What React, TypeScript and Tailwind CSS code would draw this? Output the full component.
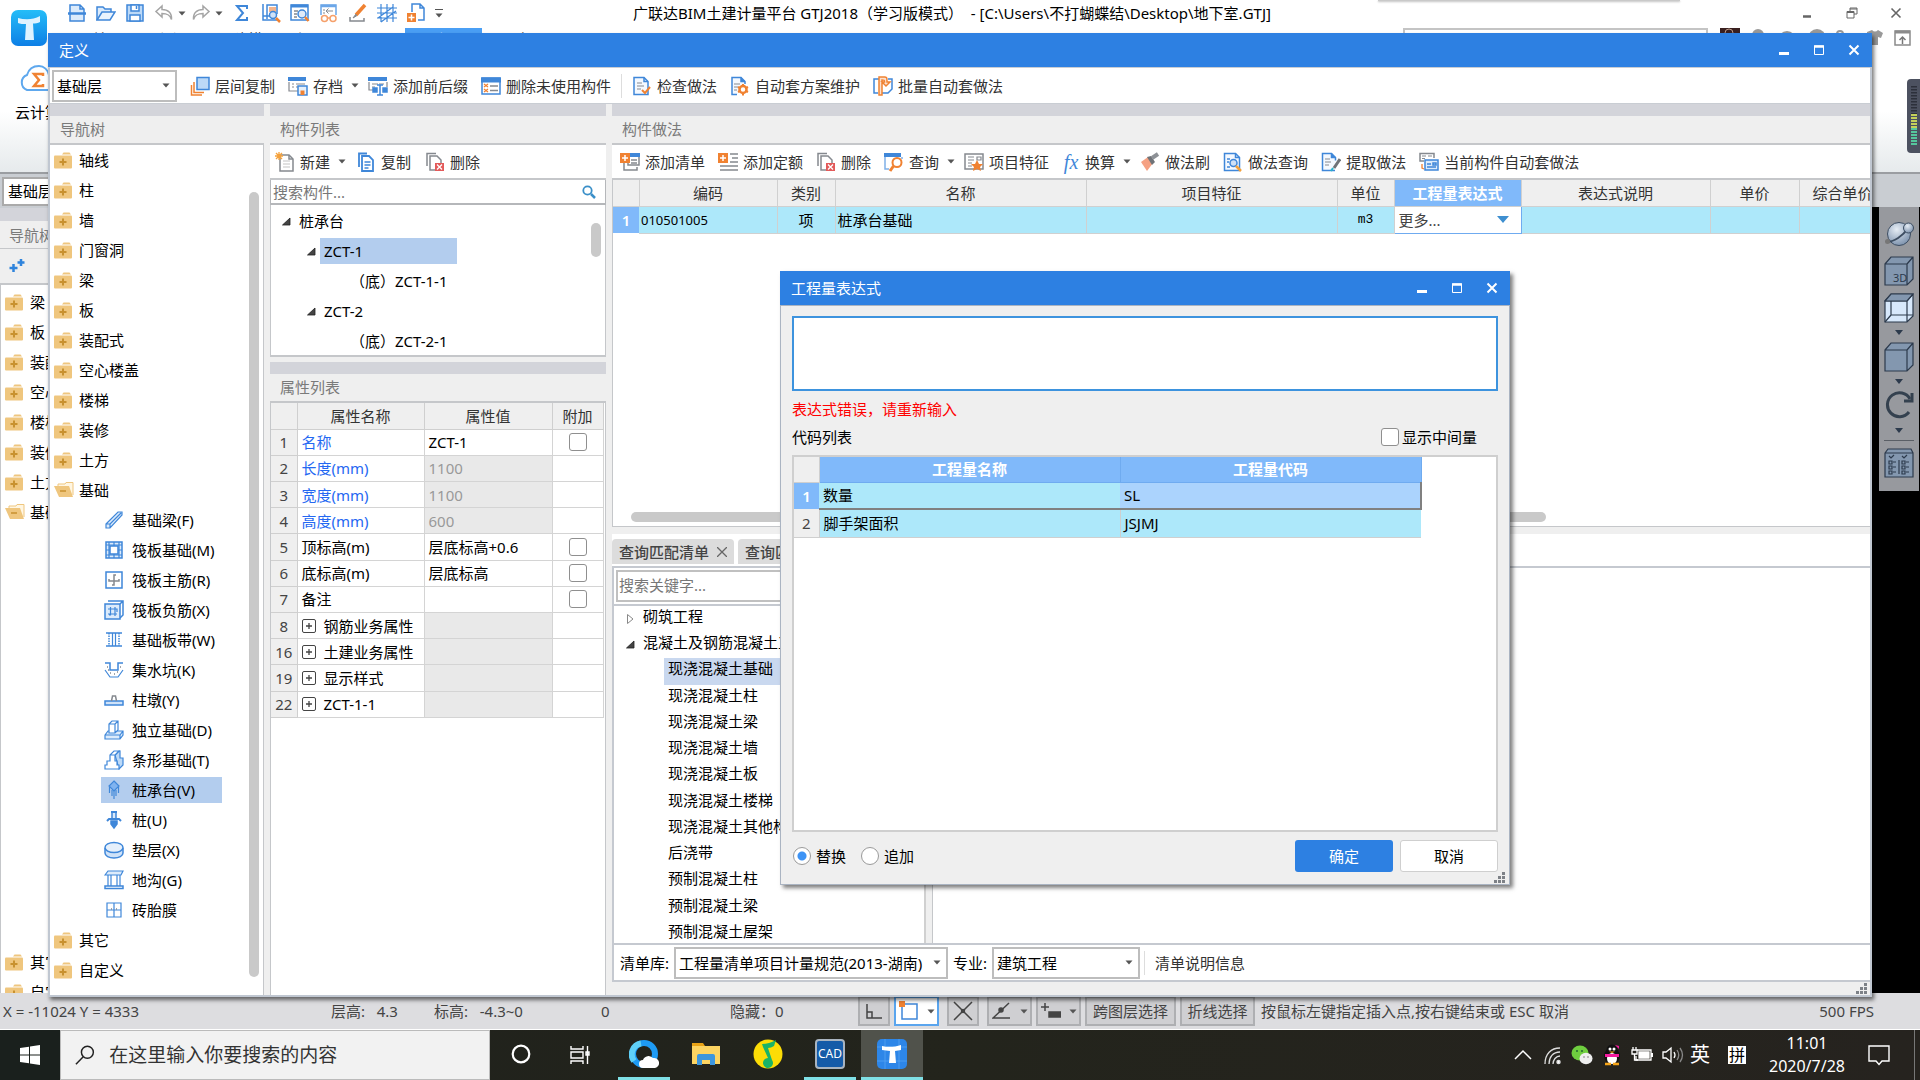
import React from "react";

const B = "#3f87d9";
const O = "#f08232";
const G = "#85898f";

type Kids = { children?: React.ReactNode };

function I({ children }: Kids) {
  return (
    <svg viewBox="0 0 20 20" className="h-5 w-5 shrink-0" fill="none" stroke={B} strokeWidth="1.5" aria-hidden="true">
      {children}
    </svg>
  );
}

function Caret() {
  return (
    <svg viewBox="0 0 8 5" className="h-[5px] w-2 shrink-0" aria-hidden="true">
      <path d="M0.5 0.5h7L4 4.5z" fill="#555" />
    </svg>
  );
}

/* ---------- quick access icons ---------- */
const quick = {
  newDoc: <I><path d="M3 2h10l4 4v12H3zM13 2v4h4" fill="#dcebfb" /><path d="M1 10.500h18" strokeWidth="2.500" /></I>,
  open: <I><path d="M1 17V4h6l2 2h6v3" fill="#dcebfb" /><path d="M1 17l5-8h13l-5 8z" fill="#eaf3fd" /></I>,
  save: <I><path d="M2 2h16v16H2z" fill="#bcd9f7" /><path d="M6 2h8v6H6zM5 12h10v6H5z" fill="#fff" /><path d="M11.500 3v3" /></I>,
  undo: <I><path d="M8 3L2 8.500 8 14v-3.500c5 0 8 1 9.500 6C18 10 14 6.500 8 6.500z" stroke="#a5a5a5" /></I>,
  redo: <I><path d="M12 3l6 5.500L12 14v-3.500c-5 0-8 1-9.500 6C2 10 6 6.500 12 6.500z" stroke="#a5a5a5" /></I>,
  sigma: <I><path d="M15 6V3H5l6 7-6 7h10v-3" strokeWidth="2" /></I>,
  calc: <I><path d="M2 1v16h14M6 16V2h10v9" /><path d="M8 4h7v5H8z" fill="#f3b48c" stroke="none" /><path d="M2 13h7" /><circle cx="12" cy="12" r="3.500" fill="#cfe2f8" /><path d="M15 15l4 4" stroke={O} strokeWidth="2.500" /></I>,
  find: <I><path d="M1 2h17v15H1z" fill="#fff" /><path d="M1 3h17" strokeWidth="3" /><path d="M4 8h4M4 11h3M4 14h3" stroke={G} /><circle cx="12" cy="11" r="4" fill="#dfeaf8" /><path d="M15 14l3.500 4" stroke={O} strokeWidth="2.500" /></I>,
  glasses: <I><path d="M2 12V2h15v10" stroke="#6ba6e8" /><path d="M2 3h15" stroke="#6ba6e8" strokeWidth="2.500" /><path d="M14 8H7m2.500-2.500L7 8l2.500 2.500M4 7h2M4 10h2" stroke={G} strokeWidth="1" /><circle cx="5.500" cy="15.500" r="3" stroke="#f5a06b" /><circle cx="14" cy="15.500" r="3" stroke="#f5a06b" /><path d="M8.500 15h2.500" stroke="#f5a06b" /></I>,
  pencil: <I><path d="M17 2L8 12" stroke={O} strokeWidth="3.500" /><path d="M8 11l-3 4 4-2.500" stroke={G} fill={G} strokeWidth="1" /><path d="M2 14v4h14v-3" stroke={G} /></I>,
  grid: <I><path d="M0 5h20M0 10h20M0 15h20M4 1v18M10 1v18M16 1v18M1 15L16 4M4 19L19 8" strokeWidth="1.200" /></I>,
  addDoc: <I><path d="M6 9V1h8l4 4v12h-6M14 1v4h4" /><path d="M1 10h9v9H1z" fill={O} stroke="none" /><path d="M5.500 11.500v6M2.500 14.500h6" stroke="#fff" /></I>,
};

/* ---------- toolbar icons ---------- */
const tb = {
  layers: <I><path d="M7 1.500h12v12H7z" fill="#bcd9f7" /><path d="M4 6v10.500h10" stroke={O} strokeWidth="1.500" /><path d="M1.500 9v10H12" stroke={O} /></I>,
  archive: <I><path d="M1 6v9h9M4 8h2M8 8h9M4 11h2M8 11h2" stroke={G} strokeWidth="1.200" /><path d="M0 3h18" strokeWidth="4" /><path d="M10 10h9v9h-9z" fill="#e6f0fb" /><path d="M12.500 14.500h4V19h-4z" fill={O} stroke="none" /></I>,
  affix: <I><path d="M1 6v8h5M19 6v5M4 8h6M11 8h5M4 11h3" stroke={G} strokeWidth="1.200" /><path d="M0 3h19" strokeWidth="4" /><path d="M5 12h4v4H5zM15 12h4v4h-4z" fill={B} /><path d="M9 9h6M9 19h6M12 9v10" /></I>,
  unused: <I><path d="M1 2h18v16H1z" fill="#fff" /><path d="M0 4h20" strokeWidth="5" /><path d="M3 8l4 3m0-3l-4 3M3 13l4 3m0-3l-4 3" stroke={O} strokeWidth="1.200" /><path d="M9 10h8M9 14.500h8" stroke={G} /></I>,
  check: <I><path d="M2 1.500h10l4 4v13H2z" fill="#f4f9ff" /><path d="M12 1.500v4h4" /><path d="M5 7h5M5 10h7M5 13h4" stroke={G} strokeWidth="1.200" /><path d="M10 14l3 3 5-6" stroke={O} strokeWidth="2" /></I>,
  gearDoc: <I><path d="M7 18.500H2v-17h9l4 4V8" fill="#f4f9ff" /><path d="M11 1.500v4h4" fill={B} /><path d="M4 8h6M4 11h4M4 14h3" stroke={G} strokeWidth="1.200" /><circle cx="13" cy="13.500" r="3.500" stroke={O} strokeWidth="2.500" /><path d="M13 8v2M13 17v2.500M8 11l2 1M16 15l2 1M8 16l2-1M16 12l2-1" stroke={O} strokeWidth="2" /></I>,
  batch: <I><path d="M6 3H1v14h4M15 3h4v10l-4 4H9" /><path d="M6 1h6c2 0 2 1 2 5l3 0-4 4-4-4 2.500 0c0-2-.5-2-2.500-2v15H6z" stroke={O} fill="#fbe0cf" /></I>,
  create: <I><path d="M5 3h9l4 4v12H5z" stroke={G} fill="#fff" /><path d="M14 3v4h4" stroke={G} /><path d="M8 9h7M8 12h7M8 15h7" stroke="#d8d8d8" /><path d="M1 1l6 6M7 1L1 7M4 0v8M0 4h8" stroke="#f5a13a" strokeWidth="1.300" /></I>,
  copy: <I><path d="M3 15V1.500h8" strokeWidth="1.800" /><path d="M6 4h7l4 4v11H6z" fill="#fff" strokeWidth="1.800" /><path d="M8.500 10h6M8.500 13h6M8.500 16h4" /></I>,
  del: <I><path d="M2 14V1.500h9" stroke={G} /><path d="M10 18H5V4h7l4 4v3" stroke={G} /><path d="M10 11h9v8h-9z" fill="#e35a5a" stroke="none" /><path d="M12 12.500l5 5m0-5l-5 5" stroke="#fff" strokeWidth="1.300" /></I>,
  addList: <I><path d="M8 3h11v10H8z" fill="#fff" stroke={G} /><path d="M8 3h12" strokeWidth="4" /><path d="M4 11v7h13v-3M11 8h6M11 11h6" stroke={G} /><path d="M0 1h10v10H0z" fill={O} stroke="none" /><path d="M5 3v6M2 6h6" stroke="#fff" /></I>,
  addQuota: <I><path d="M12 2h8M14 6h6M12 10h8M2 14h18M2 18h18" stroke={G} /><path d="M0 1h10v10H0z" fill={O} stroke="none" /><path d="M5 3v6M2 6h6" stroke="#fff" /></I>,
  query: <I><path d="M1 5v12h4M18 5v2" stroke="#7fb0e8" /><path d="M0 3h17" strokeWidth="4" /><circle cx="13" cy="10.500" r="4.500" stroke={O} strokeWidth="2" fill="#fff" /><path d="M9.500 14L6 19" stroke={O} strokeWidth="3" /></I>,
  feature: <I><path d="M1 2h18v15H1z" stroke={G} fill="#fff" /><path d="M4 5h6M4 8h6M4 11h4M4 14h4M13 5h4v3h-4z" stroke={G} strokeWidth="1.200" /><path d="M13 8l2 4h4l-3 3 1 4-4-2-4 2 1-4-3-3h4z" fill={O} stroke="none" /></I>,
  brush: <I><path d="M1 10l7-5 5 6-6 8z" fill="#f5a183" stroke="none" /><path d="M7 5l4-1 4 6-3 3z" fill="#6f7378" stroke="none" /><path d="M12 6l6-4" stroke="#8d9196" strokeWidth="4" /></I>,
  methodQuery: <I><path d="M1.500 1.500h11l4 4v13h-15z" fill="#f4f9ff" /><path d="M12.500 1.500v4h4M4 7h3M4 10h2M4 15h3" /><circle cx="10.500" cy="11" r="3.500" fill="#cfe0f5" /><path d="M13 14l5 5" stroke="#f5a13a" strokeWidth="2.500" /></I>,
  extract: <I><path d="M14 18.500H1.500v-17h9l4 4v3" fill="#f4f9ff" /><path d="M10.500 1.500v4h4" fill={B} /><path d="M4 7h5M4 10h6M4 13h4" stroke={G} strokeWidth="1.200" /><path d="M19 7l-6 9" stroke="#6f7378" strokeWidth="3" /><path d="M12 16l-2 3" stroke="#27b3c9" strokeWidth="2" /></I>,
  autoSet: <I><path d="M5 9H1V1.500h14V6" stroke={G} fill="#fff" /><path d="M3 4h4M3 6.500h3M9 4h4" stroke={G} strokeWidth="1.200" /><path d="M6 8h13v10H6z" fill="#dcebfb" /><path d="M8 12h4M8 15h9M14 11h3v2h-3z" /><path d="M3 12v4l2 1" stroke={O} strokeWidth="1.300" /></I>,
};

const fx = <span className="w-[18px] shrink-0 text-center font-['Liberation_Serif',serif] text-[20px] leading-5 text-[#3f87d9] italic">fx</span>;

/* ---------- navigation icons ---------- */
function FolderClosed() {
  return (
    <svg viewBox="0 0 18 17" className="h-[17px] w-[18px] shrink-0" aria-hidden="true">
      <path d="M8 2.500L9.500 .5h6l1.500 2z" fill="#efc67e" />
      <rect x="0" y="3.500" width="18" height="13" rx="1" fill="#efc67e" />
      <path d="M9 6.500v7M5.500 10h7" stroke="#c8912f" strokeWidth="2" />
    </svg>
  );
}
function FolderOpen() {
  return (
    <svg viewBox="0 0 20 16" className="-mr-0.5 h-4 w-5 shrink-0" aria-hidden="true">
      <path d="M4 4V2h7l1-1.500h7V13" fill="#fff6e2" stroke="#efc67e" />
      <path d="M0 4h15l4 11H5z" fill="#efc67e" />
      <path d="M6 9h6" stroke="#c8912f" strokeWidth="1.500" />
    </svg>
  );
}

const sub: { label: string; icon: React.ReactNode }[] = [
  { label: "基础梁(F)", icon: <I><path d="M2 14L14 2h4v3L6 18H2zM2 14h4v4M6 14L17 3" fill="#dcebfb" strokeWidth="1.200" /></I> },
  { label: "筏板基础(M)", icon: <I><path d="M2 2h16v16H2z" fill="#dcebfb" /><path d="M6 6h8v8H6z" fill="#fff" /><path d="M2 5h16M2 15h16M5 2v16M15 2v16M10 2v4M10 14v4M2 10h4M14 10h4" strokeWidth="1.200" /></I> },
  { label: "筏板主筋(R)", icon: <I><path d="M2 2h16v16H2z" /><path d="M5 9v2h10V9M12 5h-2v10H8" stroke={G} /></I> },
  { label: "筏板负筋(X)", icon: <I><path d="M4 1h15v14l-3 3M16 4l3-3" /><path d="M1 4h15v15H1z" fill="#dcebfb" /><path d="M4 9h9v3M4 14h9M6.500 7v8H5M11 7v9" strokeWidth="1.200" /></I> },
  { label: "基础板带(W)", icon: <I><path d="M2 3h16M2 16h16" /><path d="M8.500 3v13M11.500 3v13" strokeWidth="1.200" /><path d="M5 3v13M15 3v13" strokeDasharray="1.500 1" /></I> },
  { label: "集水坑(K)", icon: <I><path d="M1 3h5v7h8V3h5" /><path d="M1 10l5 7h8l5-7" strokeWidth="1.200" /><path d="M3 7h1M6 13h1M10 14h1M13 12h1M16 7h1M4 10h1" stroke={G} /></I> },
  { label: "柱墩(Y)", icon: <I><path d="M1 11h18v4H1z" fill="#cfe2f8" /><path d="M7.500 11l1-5h3l1 5" stroke={G} /></I> },
  { label: "独立基础(D)", icon: <I><path d="M1 15l3-4h15v4l-3 4H1zM1 15h15v4M16 15l3-4" fill="#dcebfb" strokeWidth="1.200" /><path d="M5 13V4l3-3h6v9l-3 3zM5 4h6v9M11 4l3-3" fill="#fff" strokeWidth="1.200" /></I> },
  { label: "条形基础(T)", icon: <I><path d="M11 5l4-4 1 0v7h3v7l-4 4z" fill="#bcd9f7" strokeWidth="1.200" /><path d="M1 19v-4h2v-4h3V5l4-4h5l-4 4v6h2v4h2v4zM6 5h5" fill="#fff" strokeWidth="1.200" /></I> },
  { label: "桩承台(V)", icon: <I><path d="M10 1l5 5-5 5-5-5z" fill="#7fb3f0" strokeWidth="1.200" /><path d="M5.500 7v6M10 11v8M14.500 7v6M8 10v6M12 10v6" strokeWidth="1.200" /></I> },
  { label: "桩(U)", icon: <I><path d="M8 2h4v7H8z" fill="#dcebfb" /><path d="M7 2h6" strokeWidth="2" /><path d="M3 11l2-2h10l2 2" strokeWidth="2" /><path d="M7 11h6v3l-3 4-3-4z" fill={B} /></I> },
  { label: "垫层(X)", icon: <I><path d="M1 8v5c0 3 4 5 9 5s9-2 9-5V8" fill="#cfe2f8" /><ellipse cx="10" cy="7.500" rx="9" ry="5" fill="#e6f0fb" /></I> },
  { label: "地沟(G)", icon: <I><path d="M1 5l3-4h15l-2 4zM1 5h16" fill="#dcebfb" strokeWidth="1.200" /><path d="M4 5v11M7 5v11M13 5v11M16 5v11" strokeWidth="1.200" /><path d="M1 16h18v2.500H1z" /></I> },
  { label: "砖胎膜", icon: <I><path d="M3 3h14v14H3zM10 3v14M3 10h14" strokeWidth="1.200" /><path d="M7 9h1M12 9h1" stroke={G} /></I> },
];

const navTop = ["轴线", "柱", "墙", "门窗洞", "梁", "板", "装配式", "空心楼盖", "楼梯", "装修", "土方"];

function NavRow({ label, open = false }: { label: string; open?: boolean }) {
  return (
    <li className="flex h-[30px] shrink-0 items-center">
      <button className="flex items-center gap-[7px] whitespace-nowrap text-black">
        {open ? <FolderOpen /> : <FolderClosed />}
        {label}
      </button>
    </li>
  );
}

function Tool({ icon, label, caret = false }: { icon: React.ReactNode; label: string; caret?: boolean }) {
  return (
    <button className="flex shrink-0 items-center gap-[5px] whitespace-nowrap text-[#333]">
      {icon}
      <span>{label}</span>
      {caret && <span className="-mr-1 pl-[3px]"><Caret /></span>}
    </button>
  );
}

function PanelHead({ title }: { title: string }) {
  return (
    <>
      <div className="h-3 shrink-0 bg-[#d3d4da]" />
      <h2 className="flex h-[29px] shrink-0 items-center border-b-2 border-[#c5c7ca] bg-[#efefef] pb-px pl-[10px] text-[#7a7a7a]">{title}</h2>
    </>
  );
}

function WinButtons() {
  return (
    <div className="flex items-center gap-[23px] pr-3">
      <button aria-label="最小化"><svg viewBox="0 0 12 12" className="h-3 w-3"><path d="M1 9.500h10" stroke="#fff" strokeWidth="3" /></svg></button>
      <button aria-label="最大化"><svg viewBox="0 0 12 12" className="h-3 w-3"><path d="M1.500 2h9v8.500h-9z" stroke="#fff" fill="none" /><path d="M1 2.500h10" stroke="#fff" strokeWidth="2.500" /></svg></button>
      <button aria-label="关闭"><svg viewBox="0 0 12 12" className="h-3 w-3"><path d="M1.500 1.500l9 9m0-9l-9 9" stroke="#fff" strokeWidth="2" /></svg></button>
    </div>
  );
}

function Grip() {
  return (
    <svg viewBox="0 0 12 12" className="h-3 w-3" fill="#7d8187" aria-hidden="true">
      <path d="M8 0h3v3H8zM4 4h3v3H4zM8 4h3v3H8zM0 8h3v3H0zM4 8h3v3H4zM8 8h3v3H8z" />
    </svg>
  );
}

function Combo({ label, options, className }: { label: string; options: string[]; className: string }) {
  return (
    <span className={"relative flex items-center border-2 border-[#bdbdbd] bg-white " + className}>
      <select aria-label={label} className="h-full w-full appearance-none bg-transparent pl-[3px] text-black outline-none">
        {options.map((o) => <option key={o}>{o}</option>)}
      </select>
      <span className="pointer-events-none absolute right-[5px] flex"><Caret /></span>
    </span>
  );
}

function Expanded() {
  return <svg viewBox="0 0 9 9" className="h-[9px] w-[9px] shrink-0" aria-hidden="true"><path d="M8 1v7H.5z" fill="#444" stroke="#222" strokeWidth=".8" /></svg>;
}

/* ---------- main application behind the windows ---------- */
function MainHeader() {
  return (
    <header className="relative h-[50px] shrink-0 bg-white">
      <div className="flex h-7 items-center pb-0.5">
        <div className="flex items-center gap-[9px] pl-[67px]">
          <button aria-label="新建">{quick.newDoc}</button>
          <button aria-label="打开">{quick.open}</button>
          <button aria-label="保存">{quick.save}</button>
          <button aria-label="撤销" className="flex items-center gap-1">{quick.undo}<Caret /></button>
          <button aria-label="恢复" className="-ml-1 flex items-center gap-1">{quick.redo}<Caret /></button>
          <button aria-label="汇总计算">{quick.sigma}</button>
          <button aria-label="查看工程量">{quick.calc}</button>
          <button aria-label="查找">{quick.find}</button>
          <button aria-label="查看">{quick.glasses}</button>
          <button aria-label="编辑">{quick.pencil}</button>
          <button aria-label="轴网">{quick.grid}</button>
          <button aria-label="添加">{quick.addDoc}</button>
          <button aria-label="更多" className="flex flex-col items-center gap-[3px]"><span className="h-px w-2 bg-[#555]" /><Caret /></button>
        </div>
        <h1 className="ml-[190px] text-[15px] whitespace-pre text-black">广联达BIM土建计量平台 GTJ2018（学习版模式）  - [C:\Users\不打蝴蝶结\Desktop\地下室.GTJ]</h1>
        <div className="ml-auto flex items-center gap-8 pr-[18px]">
          <button aria-label="最小化"><svg viewBox="0 0 12 12" className="h-3 w-3"><path d="M1 9.500h8" stroke="#666" strokeWidth="2.500" /></svg></button>
          <button aria-label="还原"><svg viewBox="0 0 12 12" className="h-3 w-3" fill="none" stroke="#666"><path d="M4 4V1h7v6H8M4 2h7" /><path d="M1 4.500h7V11H1zM1 5.500h7" /></svg></button>
          <button aria-label="关闭"><svg viewBox="0 0 12 12" className="h-3 w-3"><path d="M1.500 1.500l9 9m0-9l-9 9" stroke="#666" strokeWidth="1.600" /></svg></button>
        </div>
      </div>
      <div className="flex h-[22px] items-start overflow-hidden">
        <nav className="ml-[78px] flex text-[15px] leading-[22px] text-[#555]">
          <a href="#start" className="w-[64px]">开始</a>
          <a href="#setup" className="w-[91px]">工程设置</a>
          <a href="#model" className="w-[64px]">建模</a>
          <a href="#view" className="w-[62px]">视图</a>
          <a href="#tools" className="w-[46px]">工具</a>
          <a href="#qty" className="w-[77px] bg-[#4a9ff5] text-center text-white">工程量</a>
          <a href="#cloud" className="ml-[18px]">云应用</a>
        </nav>
        <div className="ml-auto flex items-start">
          <input aria-label="搜索功能" className="h-[21px] w-[305px] border-2 border-[#c4c4c4]" />
          <svg viewBox="0 0 200 22" className="ml-3 h-[22px] w-[200px]" aria-hidden="true">
            <rect x="0" y="0" width="20" height="20" fill="#3a2020" /><circle cx="9" cy="5" r="4" fill="none" stroke="#b98" />
            <circle cx="38" cy="7" r="6" fill="#999" /><circle cx="67" cy="12" r="9" fill="#999" /><circle cx="97" cy="10" r="9" fill="#999" />
            <circle cx="120" cy="6" r="3" fill="none" stroke="#999" strokeWidth="2" />
            <path d="M147 4l5-2q3 3 6 0l5 3-2 5-3-1v8h-9V9l-2 0z" fill="#999" />
            <path d="M175 3h15v14h-15z" fill="none" stroke="#8b8b8b" strokeWidth="1.500" /><path d="M175 4h15" stroke="#8b8b8b" strokeWidth="3" /><path d="M182.500 16V9m-3 3l3-3 3 3" fill="none" stroke="#777" strokeWidth="1.500" />
          </svg>
        </div>
      </div>
      <svg viewBox="0 0 36 36" className="absolute top-[10px] left-[11px] h-9 w-9" aria-hidden="true">
        <defs><linearGradient id="logo" x1="0" y1="0" x2="0" y2="1"><stop offset="0" stopColor="#25bdf8" /><stop offset="1" stopColor="#0d7fe6" /></linearGradient></defs>
        <rect width="36" height="36" rx="7" fill="url(#logo)" />
        <path d="M7 8c7 2 15 2 22-2v6c-2 1-5 1.500-7 1.500L23 30h-9l1-16c-3 0-6 0-8-1z" fill="#dff3ff" />
      </svg>
      <div className="absolute top-0 right-[240px] h-px w-[302px] bg-[#c9c9c9] shadow-[0_1px_2px_#aaa]" />
    </header>
  );
}

function MainLeft() {
  return (
    <div className="flex w-[60px] shrink-0 flex-col overflow-hidden">
      <div className="h-[34px] shrink-0 bg-[#c9cdd2] pt-[3px] pl-[2px]">
        <div className="h-[29px] w-20 border-2 border-[#aaa] bg-white pl-1 leading-[24px] text-black">基础层</div>
      </div>
      <div className="h-[13px] shrink-0 bg-[#d3d4da]" />
      <div className="h-7 shrink-0 border-b border-[#c5c7ca] bg-[#efefef] pl-[9px] leading-7 whitespace-nowrap text-[#7a7a7a]">导航树</div>
      <div className="flex h-[36px] shrink-0 items-center border-b-2 border-[#c5c7ca] bg-[#efefef] pl-[9px]">
        <svg viewBox="0 0 16 16" className="h-4 w-4" stroke="#2f84dc" strokeWidth="2.500" aria-hidden="true"><path d="M4.500 6v8M.5 10h8M12 1v7M8.500 4.500h7" /></svg>
      </div>
      <ul className="flex min-h-0 flex-1 flex-col overflow-hidden border-l border-[#c5c7ca] bg-white pt-[2px] pl-1">
        {["梁", "板", "装配式", "空心楼盖", "楼梯", "装修", "土方"].map((n) => <NavRow key={n} label={n} />)}
        <NavRow label="基础" open />
        <li className="h-[420px] shrink-0" />
        <NavRow label="其它" />
        <NavRow label="自定义" />
      </ul>
    </div>
  );
}

function Cube({ fill, children }: { fill: string } & Kids) {
  return (
    <svg viewBox="0 0 30 30" className="h-[30px] w-[30px] shrink-0" stroke="#2c3a4c" strokeWidth="1.200" fill={fill} aria-hidden="true">
      <path d="M1 8l6-7h22v22l-6 6H1zM1 8h22v21M23 8l6-7" />
      {children}
    </svg>
  );
}

function ViewTools() {
  const c = <svg viewBox="0 0 8 5" className="h-[5px] w-2 shrink-0"><path d="M0 0h8L4 5z" fill="#2c3a4c" /></svg>;
  return (
    <div className="flex h-[284px] w-10 flex-col items-center gap-[7px] bg-[#97999e] pt-3">
      <button aria-label="动态观察">
        <svg viewBox="0 0 30 30" className="h-[30px] w-[30px]" aria-hidden="true">
          <defs><radialGradient id="ball" cx=".4" cy=".3" r=".8"><stop offset="0" stopColor="#e6edf5" /><stop offset="1" stopColor="#7188a5" /></radialGradient></defs>
          <circle cx="15" cy="15" r="11.500" fill="url(#ball)" stroke="#3d4d61" />
          <path d="M2 23c8 0 17-6 22-14" fill="none" stroke="#3d4d61" strokeWidth="2" />
          <circle cx="3.500" cy="22.500" r="2.500" fill="#777" /><circle cx="24.500" cy="9" r="5" fill="url(#ball)" stroke="#3d4d61" />
        </svg>
      </button>
      <button aria-label="三维"><Cube fill="#8397af"><text x="9" y="26" fontSize="11" stroke="none" fill="#2c3a4c">3D</text></Cube></button>
      <button aria-label="线框"><Cube fill="#d7e8fb"><path d="M1 8l6-7h22l-6 7z" fill="#8397af" /><path d="M7 8v14h22M7 22l-6 7" fill="none" /></Cube></button>
      {c}
      <button aria-label="实体"><Cube fill="#8397af" /></button>
      {c}
      <button aria-label="旋转">
        <svg viewBox="0 0 30 30" className="h-[30px] w-[30px]" fill="none" stroke="#34414f" strokeWidth="3" aria-hidden="true"><path d="M25 21a12 12 0 1 1 1-13" /><path d="M28 2v8h-8" /></svg>
      </button>
      {c}
      <span className="h-px w-[30px] shrink-0 bg-[#5a5f66]" />
      <button aria-label="显示设置">
        <svg viewBox="0 0 30 30" className="h-[30px] w-[30px]" stroke="#2c3a4c" strokeWidth="1.200" fill="#8397af" aria-hidden="true">
          <path d="M1 5l3-4h23l2 4v24H1zM1 5h28" /><path d="M5 8l2 2 3-3M18 8l2 2 3-3M15 12v14M5 13h3v3H5zM5 18h3v3H5zM5 23h3v3H5zM18 13h3v3h-3zM18 18h3v3h-3zM18 23h3v3h-3zM9 14h3M9 19h3M9 24h3M22 14h3M22 19h3M22 24h3" fill="none" />
        </svg>
      </button>
    </div>
  );
}

function StatusBar() {
  const box = "flex h-[30px] shrink-0 items-center justify-center gap-2 border-2 border-[#aeafb2] bg-[#cfcfd2]";
  return (
    <footer className="flex h-[37px] shrink-0 items-center border-b border-white bg-[#dddde0] pl-[3px] whitespace-nowrap text-[#444]">
      <span className="w-[328px]">X = -11024 Y = 4333</span>
      <span className="w-[103px] whitespace-pre">层高:   4.3</span>
      <span className="w-[167px] whitespace-pre">标高:   -4.3~0</span>
      <span className="w-[129px]">0</span>
      <span className="w-[128px]">隐藏：0</span>
      <div className="flex items-center gap-1">
        <button aria-label="正交" className={box + " w-8"}><svg viewBox="0 0 20 20" className="h-5 w-5" fill="none" stroke="#444" strokeWidth="1.500"><path d="M3 3v14h15M3 11h5v6" /></svg></button>
        <button aria-label="捕捉" className="flex h-[30px] w-[45px] items-center justify-center gap-2 border-2 border-[#5aa5ee] bg-white">
          <svg viewBox="0 0 20 20" className="h-5 w-5" fill="none" stroke={B} strokeWidth="1.500"><path d="M3 3h15v15H3z" /><path d="M0 0h6v6H0z" fill={O} stroke="none" /></svg><Caret />
        </button>
        <button aria-label="交点" className={box + " ml-1 w-8"}><svg viewBox="0 0 20 20" className="h-5 w-5" fill="none" stroke="#444" strokeWidth="1.500"><path d="M1 1l18 18M19 1L1 19" /><circle cx="10" cy="10" r="1.500" fill="#444" /></svg></button>
        <button aria-label="角度" className={box + " ml-1 w-[45px]"}><svg viewBox="0 0 20 20" className="h-5 w-5" fill="none" stroke="#444" strokeWidth="1.500"><path d="M17 2L1 17h17" /><circle cx="9" cy="9" r="2" fill="#444" /></svg><Caret /></button>
        <button aria-label="偏移" className={box + " w-[45px]"}><svg viewBox="0 0 20 20" className="h-5 w-5" fill="none" stroke="#444" strokeWidth="1.500"><path d="M4 2v8M0 6h8" /><path d="M8 11h12v5H8z" fill="#444" /></svg><Caret /></button>
        <button className={box + " w-[91px]"}>跨图层选择</button>
        <button className={box + " w-[75px]"}>折线选择</button>
      </div>
      <span className="pl-[6px]">按鼠标左键指定插入点,按右键结束或 ESC 取消</span>
      <span className="ml-auto pr-[46px]">500 FPS</span>
    </footer>
  );
}

function Taskbar() {
  const slot = "flex h-full w-[62px] shrink-0 items-center justify-center border-b-[3px]";
  return (
    <div className="flex h-[50px] shrink-0 items-center bg-linear-to-r from-[#1f211c] via-[#23241c] to-[#26231f] text-white">
      <button aria-label="开始" className="flex h-full w-[60px] items-center justify-center bg-[#1a201d]">
        <svg viewBox="0 0 20 20" className="h-5 w-5" fill="#fff"><path d="M0 3l9-1.300V9.500H0zM10 1.500L20 0v9.500H10zM0 10.500h9v7.800L0 17zM10 10.500h10V20l-10-1.500z" /></svg>
      </button>
      <label className="flex h-full w-[430px] shrink-0 items-center gap-[14px] border border-[#bbb] bg-[#f2f2f2] pl-[14px]">
        <svg viewBox="0 0 22 22" className="h-[22px] w-[22px]" fill="none" stroke="#222" strokeWidth="1.600"><circle cx="13.500" cy="8" r="6.500" /><path d="M9 13l-8 8" /></svg>
        <input aria-label="搜索" placeholder="在这里输入你要搜索的内容" className="w-full bg-transparent text-[19px] outline-none placeholder:text-[#333]" />
      </label>
      <div className="flex h-full">
        <button aria-label="Cortana" className={slot + " border-transparent"}><svg viewBox="0 0 20 20" className="h-5 w-5" fill="none" stroke="#fff" strokeWidth="2.200"><circle cx="10" cy="10" r="8.300" /></svg></button>
        <button aria-label="任务视图" className="flex h-full w-14 items-center justify-center"><svg viewBox="0 0 20 20" className="h-5 w-5" fill="none" stroke="#fff" strokeWidth="1.400"><path d="M1 1v3h12V1M1 19v-3h12v3M1 7h12v6H1zM17.500 1v18M16 7h3v3h-3z" /></svg></button>
        <button aria-label="QQ浏览器" className="ml-[5px] flex h-full w-[62px] items-center justify-center">
          <span className="flex h-full w-[52px] items-center justify-center border-b-[3px] border-[#7fe0e6]"><svg viewBox="0 0 30 30" className="h-[30px] w-[30px]"><circle cx="15" cy="15" r="11" fill="none" stroke="#1e9bf5" strokeWidth="6" /><path d="M5 22A11 11 0 0 1 12 4.500" fill="none" stroke="#5fd0f7" strokeWidth="6" /><path d="M14 29a4 4 0 0 1 0-8 6 6 0 0 1 10-2 5 5 0 0 1 2 10z" fill="#fff" /></svg></span>
        </button>
        <button aria-label="文件资源管理器" className={slot + " border-transparent"}><svg viewBox="0 0 28 26" className="h-[26px] w-7"><path d="M0 2h11l2 3H0z" fill="#e8a317" /><path d="M0 5h28v18H0z" fill="#fcd462" /><path d="M5 24v-9q0-2 2-2h14q2 0 2 2v9h-5v-5h-8v5z" fill="#3d96dd" /></svg></button>
        <button aria-label="QQ音乐" className={slot + " border-transparent"}><svg viewBox="0 0 30 30" className="h-[30px] w-[30px]"><circle cx="15" cy="15" r="14.500" fill="#fcdc06" /><path d="M9 5q7 0 14-4l-2 6q-3 2-6 2l4 12a5 5 0 1 1-4-2L10 8z" fill="#1ab367" /></svg></button>
        <button aria-label="CAD" className="flex h-full w-[62px] items-center justify-center">
          <span className="flex h-full w-[52px] items-center justify-center border-b-[3px] border-[#7fe0e6]"><span className="flex h-[30px] w-[30px] items-center justify-center rounded-sm border-2 border-[#a9b4c0] bg-[#155ba8] text-[12px]">CAD</span></span>
        </button>
        <button aria-label="广联达" className={slot + " border-[#7fe0e6] bg-[#50524b]"}><svg viewBox="0 0 30 30" className="h-[30px] w-[30px]"><rect width="30" height="30" rx="5" fill="#2d86e8" /><path d="M0 8h30M0 22h30M8 0v30M22 0v30" stroke="#5aa6f2" strokeWidth=".7" /><path d="M5 7c6 1.500 13 1 19-1v5l-6 1 1 12h-7l1-12-8-1z" fill="#fff" /></svg></button>
      </div>
      <div className="ml-auto flex h-full items-center">
        <div className="flex items-center gap-[9px]">
          <button aria-label="显示隐藏的图标"><svg viewBox="0 0 20 20" className="h-5 w-5" fill="none" stroke="#fff" strokeWidth="1.500"><path d="M2 14l8-8 8 8" /></svg></button>
          <svg viewBox="0 0 20 20" className="h-5 w-5" fill="none" stroke="#ddd" strokeWidth="1.300"><path d="M3 19C3 9 9 3 18 3M7 19C7 12 11 7 18 7M11 19c0-4 3-8 7-8" /><circle cx="16.500" cy="17" r="1.600" fill="#fff" /></svg>
          <svg viewBox="0 0 22 22" className="h-[22px] w-[22px]"><ellipse cx="9" cy="9" rx="8.500" ry="7.500" fill="#6fce3f" /><circle cx="6" cy="7" r="1" fill="#263" /><circle cx="11" cy="7" r="1" fill="#263" /><ellipse cx="15" cy="14.500" rx="6.500" ry="5.800" fill="#eee" /><circle cx="13" cy="13" r=".8" fill="#777" /><circle cx="17" cy="13" r=".8" fill="#777" /></svg>
          <svg viewBox="0 0 20 22" className="h-[22px] w-5"><ellipse cx="10" cy="12" rx="8" ry="8" fill="#111" /><circle cx="10" cy="6" r="5.500" fill="#111" /><ellipse cx="10" cy="14.500" rx="5" ry="5.500" fill="#fff" /><circle cx="8" cy="5" r="1.500" fill="#fff" /><circle cx="12" cy="5" r="1.500" fill="#fff" /><path d="M3 10h14v3H3zM13 1l4 1v3z" fill="#f31a9d" /><path d="M7 7.500h6L10 9z" fill="#f5a51a" /><path d="M3 20h6M11 20h6" stroke="#f5a51a" strokeWidth="2.500" /></svg>
          <svg viewBox="0 0 22 20" className="h-5 w-[22px]" fill="none" stroke="#fff" strokeWidth="1.300"><path d="M6 5h14v10H5v-4" /><path d="M8 7h10v6H8z" fill="#fff" /><path d="M2 2v3M5 2v3M1 5h5v4H1zM3.500 9v6H7" /><path d="M21 8v4" strokeWidth="2" /></svg>
          <svg viewBox="0 0 22 20" className="h-5 w-[22px]" fill="none" stroke="#fff" strokeWidth="1.300"><path d="M1 7h3l5-4v14l-5-4H1z" /><path d="M12 7q2 3 0 6" /><path d="M15 5q3.500 5 0 10M18 3q5 7 0 14" stroke="#888" /></svg>
        </div>
        <span className="ml-[6px] text-xl">英</span>
        <span className="ml-[18px] flex h-[18px] w-[18px] items-center justify-center bg-white text-[16px] leading-[18px] text-black">拼</span>
        <div className="ml-[22px] flex w-[78px] flex-col items-center text-[16px] leading-[23px]"><span>11:01</span><span>2020/7/28</span></div>
        <button aria-label="通知" className="ml-[22px]"><svg viewBox="0 0 22 22" className="h-[22px] w-[22px]" fill="none" stroke="#fff" strokeWidth="1.400"><path d="M1 2h20v15h-7l-3 3.500L8 17H1z" /></svg></button>
        <span className="mr-[5px] ml-6 h-full w-px bg-[#777]" />
      </div>
    </div>
  );
}

/* ---------- definition window ---------- */
function NavPanel() {
  return (
    <section className="flex w-[214px] shrink-0 flex-col">
      <PanelHead title="导航树" />
      <div className="relative min-h-0 flex-1 overflow-hidden border-r border-[#c5c7ca] bg-white">
        <ul className="flex flex-col pl-1">
          {navTop.map((n) => <NavRow key={n} label={n} />)}
          <NavRow label="基础" open />
          {sub.map((s) => (
            <li key={s.label} className="flex h-[30px] items-center pl-[47px]">
              <button className={"flex h-[26px] items-center gap-2 pl-[3px] whitespace-nowrap text-black " + (s.label === "桩承台(V)" ? "w-[121px] bg-[#b3cdee]" : "")}>{s.icon}{s.label}</button>
            </li>
          ))}
          <NavRow label="其它" />
          <NavRow label="自定义" />
        </ul>
        <div className="absolute top-[47px] right-1 bottom-[18px] w-[10px] rounded-full bg-[#c9c9c9]" />
      </div>
    </section>
  );
}

type Prop = { no: number; name: string; value?: string; kind: "key" | "dim" | "plain" | "group" };
const props: Prop[] = [
  { no: 1, name: "名称", value: "ZCT-1", kind: "key" },
  { no: 2, name: "长度(mm)", value: "1100", kind: "dim" },
  { no: 3, name: "宽度(mm)", value: "1100", kind: "dim" },
  { no: 4, name: "高度(mm)", value: "600", kind: "dim" },
  { no: 5, name: "顶标高(m)", value: "层底标高+0.6", kind: "plain" },
  { no: 6, name: "底标高(m)", value: "层底标高", kind: "plain" },
  { no: 7, name: "备注", value: "", kind: "plain" },
  { no: 8, name: "钢筋业务属性", kind: "group" },
  { no: 16, name: "土建业务属性", kind: "group" },
  { no: 19, name: "显示样式", kind: "group" },
  { no: 22, name: "ZCT-1-1", kind: "group" },
];

const checkCls = "block h-[18px] w-[18px] appearance-none rounded-[3px] border border-[#8f8f8f] bg-white";

function ListPanel() {
  return (
    <section className="flex w-[336px] shrink-0 flex-col">
      <PanelHead title="构件列表" />
      <div className="flex h-[35px] shrink-0 items-center gap-[14px] border-b-2 border-[#c5c7ca] bg-white pl-[5px]">
        <Tool icon={tb.create} label="新建" caret />
        <Tool icon={tb.copy} label="复制" />
        <Tool icon={tb.del} label="删除" />
      </div>
      <div className="flex h-[25px] shrink-0 items-center border-x border-b-2 border-[#b5b7ba] bg-white pr-[9px]">
        <input aria-label="搜索构件" placeholder="搜索构件..." className="min-w-0 flex-1 pl-0.5 outline-none placeholder:text-[#777]" />
        <svg viewBox="0 0 14 14" className="h-[14px] w-[14px]" fill="none" stroke="#3a8fc8" strokeWidth="1.800" aria-hidden="true"><circle cx="5.500" cy="5.500" r="4.200" /><path d="M9 9l4 4" strokeWidth="2.500" /></svg>
      </div>
      <div className="relative h-[152px] shrink-0 overflow-hidden border-x border-b-2 border-[#c5c7ca] bg-white">
        <ul className="pt-px text-black">
          <li className="flex h-[30px] items-center gap-2 pl-[11px]"><Expanded />桩承台</li>
          <li className="flex h-[30px] items-center gap-1 pl-9"><Expanded /><button className="h-[26px] w-[137px] bg-[#b3cdee] pl-1 text-left">ZCT-1</button></li>
          <li className="flex h-[30px] items-center pl-[79px]">（底）ZCT-1-1</li>
          <li className="flex h-[30px] items-center gap-2 pl-9"><Expanded />ZCT-2</li>
          <li className="flex h-[30px] items-center pl-[79px]">（底）ZCT-2-1</li>
        </ul>
        <div className="absolute top-[18px] right-1 h-[34px] w-[10px] rounded-full bg-[#c9c9c9]" />
      </div>
      <div className="h-[5px] shrink-0" />
      <PanelHead title="属性列表" />
      <div className="min-h-0 flex-1 border-x border-[#c5c7ca] bg-white">
        <table className="h-[315px] w-[332px] table-fixed border-collapse">
          <colgroup><col className="w-[26px]" /><col className="w-[127px]" /><col className="w-[128px]" /><col className="w-[51px]" /></colgroup>
          <thead>
            <tr className="h-[26px] bg-[#efefef] text-[#333]">
              {["", "属性名称", "属性值", "附加"].map((h, i) => <th key={i} className="border-r border-b border-[#cfcfcf] p-0 font-normal">{h}</th>)}
            </tr>
          </thead>
          <tbody>
            {props.map((p) => (
              <tr key={p.no} className="h-[26px] text-black">
                <td className="border-r border-b border-[#cfcfcf] bg-[#efefef] p-0 text-center text-[#444]">{p.no}</td>
                <td className={"border-r border-b border-[#d4d4d4] p-0 pl-1 whitespace-nowrap " + (p.kind === "key" || p.kind === "dim" ? "text-[#2468f2]" : "")}>
                  {p.kind === "group" ? (
                    <button className="flex items-center gap-2">
                      <svg viewBox="0 0 14 14" className="h-[14px] w-[14px]" fill="none" stroke="#444" aria-hidden="true"><rect x=".5" y=".5" width="13" height="13" rx="1.500" /><path d="M7 4v6M4 7h6" strokeWidth="1.300" /></svg>
                      {p.name}
                    </button>
                  ) : p.name}
                </td>
                <td className={"border-r border-b border-[#d4d4d4] p-0 pl-1 " + (p.kind === "dim" || p.kind === "group" ? "bg-[#e9e9e9] text-[#999]" : "")}>{p.value}</td>
                <td className="border-r border-b border-[#d4d4d4] p-0">
                  {(p.kind === "key" || p.kind === "plain") && <input type="checkbox" aria-label={"附加 " + p.name} className={checkCls + " mx-auto"} />}
                </td>
              </tr>
            ))}
          </tbody>
        </table>
      </div>
    </section>
  );
}

function MethodTable() {
  const heads = ["", "编码", "类别", "名称", "项目特征", "单位", "工程量表达式", "表达式说明", "单价", "综合单价"];
  const c = "border-r border-b border-[#d0d0d0] p-0";
  return (
    <table className="w-[1273px] table-fixed border-collapse">
      <colgroup>
        <col className="w-[26px]" /><col className="w-[138px]" /><col className="w-[58px]" /><col className="w-[251px]" /><col className="w-[251px]" />
        <col className="w-[57px]" /><col className="w-[127px]" /><col className="w-[189px]" /><col className="w-[89px]" /><col className="w-[87px]" />
      </colgroup>
      <thead>
        <tr className="h-[26px] bg-[#efefef] text-[#333]">
          {heads.map((h, i) => <th key={i} className={c + (i === 6 ? " bg-[#80b9fa] font-semibold text-white" : " font-normal")}>{h}</th>)}
        </tr>
      </thead>
      <tbody>
        <tr className="h-[27px] bg-[#ade8fa] text-black">
          <td className="bg-[#80b9fa] p-0 text-center font-semibold text-white">1</td>
          <td className={c + " pl-0.5 text-[13px]"}>010501005</td>
          <td className={c + " text-center"}>项</td>
          <td className={c + " pl-0.5"}>桩承台基础</td>
          <td className={c} />
          <td className={c + " text-center font-['Liberation_Mono',monospace] text-[13px]"}>m3</td>
          <td className="border border-[#6fabf0] bg-white p-0">
            <button className="flex w-full items-center justify-between pr-3 pl-1 text-[#444]">更多...<svg viewBox="0 0 12 7" className="h-[7px] w-3" aria-hidden="true"><path d="M0 0h12L6 7z" fill="#3e8fd0" /></svg></button>
          </td>
          <td className={c} /><td className={c} /><td className={c} />
        </tr>
      </tbody>
    </table>
  );
}

const concrete = ["现浇混凝土基础", "现浇混凝土柱", "现浇混凝土梁", "现浇混凝土墙", "现浇混凝土板", "现浇混凝土楼梯", "现浇混凝土其他构件", "后浇带", "预制混凝土柱", "预制混凝土梁", "预制混凝土屋架"];

function MethodPanel() {
  return (
    <section className="flex min-w-0 flex-1 flex-col">
      <PanelHead title="构件做法" />
      <div className="flex h-[35px] shrink-0 items-center gap-[13px] overflow-hidden border-b-2 border-[#c5c7ca] bg-white pl-2">
        <Tool icon={tb.addList} label="添加清单" />
        <Tool icon={tb.addQuota} label="添加定额" />
        <Tool icon={tb.del} label="删除" />
        <Tool icon={tb.query} label="查询" caret />
        <Tool icon={tb.feature} label="项目特征" />
        <Tool icon={fx} label="换算" caret />
        <Tool icon={tb.brush} label="做法刷" />
        <Tool icon={tb.methodQuery} label="做法查询" />
        <Tool icon={tb.extract} label="提取做法" />
        <Tool icon={tb.autoSet} label="当前构件自动套做法" />
      </div>
      <div className="flex h-[347px] shrink-0 flex-col overflow-hidden border-b border-l border-[#c5c7ca] bg-white">
        <MethodTable />
        <div className="mt-auto mr-[324px] mb-1 ml-[18px] h-[10px] rounded-full bg-[#c9c9c9]" />
      </div>
      <div className="h-[7px] shrink-0" />
      <div className="flex h-8 shrink-0 items-start gap-1 bg-white pt-[5px] font-medium text-[#444]">
        <button className="flex h-[25px] w-[122px] shrink-0 items-center gap-2 rounded-t bg-[#dcdcdc] pl-[7px]">
          查询匹配清单
          <svg viewBox="0 0 10 10" className="h-[10px] w-[10px]" stroke="#666" strokeWidth="1.300" aria-hidden="true"><path d="M0 0l10 10M10 0L0 10" /></svg>
        </button>
        <button className="flex h-[25px] w-[122px] shrink-0 items-center rounded-t bg-[#dcdcdc] pl-[7px]">查询匹配定额</button>
      </div>
      <div className="flex min-h-0 flex-1 flex-col border-2 border-r-0 border-[#c5c9d0]">
        <div className="flex min-h-0 flex-1 gap-[6px]">
          <div className="flex w-[312px] shrink-0 flex-col overflow-hidden border-r-2 border-[#d0d0d0] bg-white">
            <div className="shrink-0 border-b-2 border-[#c5c9d0] px-0.5 py-[2px]">
              <input aria-label="搜索关键字" placeholder="搜索关键字..." className="block h-8 w-full border-2 border-[#c0c0c0] pb-0.5 pl-[1px] outline-none placeholder:text-[#777]" />
            </div>
            <ul className="flex h-[341px] shrink-0 flex-col text-black">
              <li className="flex flex-1 gap-2 pl-3 leading-[20px] whitespace-nowrap"><svg viewBox="0 0 9 12" className="mt-[7px] h-3 w-[9px]" aria-hidden="true"><path d="M1.500 1.500v9L7 6z" fill="none" stroke="#888" /></svg>砌筑工程</li>
              <li className="flex flex-1 gap-2 pl-3 leading-[20px] whitespace-nowrap"><span className="flex pt-[8px]"><Expanded /></span>混凝土及钢筋混凝土工程</li>
              {concrete.map((t, i) => (
                <li key={t} className={"ml-[50px] flex-1 pl-1 leading-[20px] whitespace-nowrap " + (i === 0 ? "bg-[#c9d8ef]" : "")}>{t}</li>
              ))}
            </ul>
          </div>
          <div className="flex-1 border-l border-[#c5c7ca] bg-white" />
        </div>
        <div className="flex h-[37px] shrink-0 items-center border-t-2 border-[#c5c9d0] bg-white pl-[6px] whitespace-nowrap text-black">
          <span className="w-[54px]">清单库:</span>
          <Combo label="清单库" options={["工程量清单项目计量规范(2013-湖南)"]} className="h-8 w-[274px]" />
          <span className="w-[44px] pl-[5px]">专业:</span>
          <Combo label="专业" options={["建筑工程"]} className="h-8 w-[148px]" />
          <span className="mx-1 h-6 w-px bg-[#ddd]" />
          <button className="pl-[6px] text-[#333]">清单说明信息</button>
        </div>
      </div>
      <div className="flex h-[13px] shrink-0 items-center justify-end pr-0.5"><Grip /></div>
    </section>
  );
}

function DefinitionWindow() {
  return (
    <div className="absolute top-[33px] right-12 bottom-[83px] left-12 flex flex-col shadow-[2px_3px_4px_rgba(0,0,0,0.55)]">
      <div className="flex h-[34px] shrink-0 items-center justify-between bg-[#2d80e2] pl-[11px] text-white"><span>定义</span><WinButtons /></div>
      <div className="flex min-h-0 flex-1 flex-col border-x-2 border-b-2 border-[#c0c7d1] bg-[#efefef]">
        <div className="flex h-[37px] shrink-0 items-center gap-[13px] overflow-hidden border-y border-[#c9cdd3] bg-white pl-[2px]">
          <Combo label="楼层" options={["基础层"]} className="h-8 w-[125px] shrink-0" />
          <Tool icon={tb.layers} label="层间复制" />
          <Tool icon={tb.archive} label="存档" caret />
          <Tool icon={tb.affix} label="添加前后缀" />
          <Tool icon={tb.unused} label="删除未使用构件" />
          <span className="-mx-[3px] h-6 w-px bg-[#ddd]" />
          <Tool icon={tb.check} label="检查做法" />
          <Tool icon={tb.gearDoc} label="自动套方案维护" />
          <Tool icon={tb.batch} label="批量自动套做法" />
        </div>
        <div className="flex min-h-0 flex-1 gap-[6px]">
          <NavPanel />
          <ListPanel />
          <MethodPanel />
        </div>
      </div>
    </div>
  );
}

/* ---------- expression dialog ---------- */
function ExpressionDialog() {
  const th = "border-r border-b border-[#6fabf0] bg-[#80b9fa] p-0 font-semibold text-white";
  const radio = "h-[18px] w-[18px] appearance-none rounded-full border border-[#9a9a9a] bg-white checked:bg-[radial-gradient(#3d93f5_0_4px,#fff_5px)]";
  return (
    <div role="dialog" aria-label="工程量表达式" className="absolute top-[271px] left-[780px] flex h-[614px] w-[730px] flex-col shadow-[3px_3px_4px_rgba(0,0,0,0.5)]">
      <div className="flex h-[34px] shrink-0 items-center justify-between bg-[#2d80e2] pl-[11px] text-white"><span>工程量表达式</span><WinButtons /></div>
      <div className="flex min-h-0 flex-1 flex-col border border-[#aab4c2] bg-[#efefef] px-[11px] pt-[10px] text-black">
        <textarea aria-label="表达式" className="h-[75px] shrink-0 resize-none border-2 border-[#3d93de] bg-white outline-none" />
        <p className="mt-[6px] leading-6 text-[#ff0000]">表达式错误，请重新输入</p>
        <div className="mt-1 flex h-6 items-center justify-between">
          <span>代码列表</span>
          <label className="flex items-center gap-[3px] pr-[21px]"><input type="checkbox" className={checkCls} />显示中间量</label>
        </div>
        <div className="mt-[6px] h-[377px] shrink-0 border-2 border-[#cfcfcf] bg-white">
          <table className="w-[627px] table-fixed border-collapse">
            <colgroup><col className="w-[25px]" /><col className="w-[301px]" /><col className="w-[301px]" /></colgroup>
            <thead>
              <tr className="h-[25px]"><th className="border-r border-b border-[#cfcfcf] bg-[#efefef] p-0" /><th className={th}>工程量名称</th><th className={th}>工程量代码</th></tr>
            </thead>
            <tbody>
              <tr className="h-[27px]">
                <td className="bg-[#80b9fa] p-0 text-center font-semibold text-white">1</td>
                <td className="border-b-2 border-b-[#808080] bg-[#ade8fa] p-0 pl-1">数量</td>
                <td className="border-r-2 border-b-2 border-[#808080] bg-[#abd3fd] p-0 pl-1">SL</td>
              </tr>
              <tr className="h-[28px]">
                <td className="border-r border-b border-[#cfcfcf] bg-[#efefef] p-0 text-center text-[#444]">2</td>
                <td className="border-r border-b border-[#cfcfcf] bg-[#ade8fa] p-0 pl-1">脚手架面积</td>
                <td className="border-b border-[#cfcfcf] bg-[#ade8fa] p-0 pl-1">JSJMJ</td>
              </tr>
            </tbody>
          </table>
        </div>
        <div className="mt-2 flex h-8 shrink-0 items-center">
          <label className="flex items-center gap-[5px] pl-[1px]"><input type="radio" name="mode" defaultChecked className={radio} />替换</label>
          <label className="ml-[15px] flex items-center gap-[5px]"><input type="radio" name="mode" className={radio} />追加</label>
          <button className="ml-auto h-8 w-[98px] rounded-[3px] bg-[#2d80e2] text-white">确定</button>
          <button className="ml-[7px] h-8 w-[98px] rounded-[3px] border border-[#cfcfcf] bg-white">取消</button>
        </div>
        <div className="-mr-2 self-end"><Grip /></div>
      </div>
    </div>
  );
}

export default function App() {
  return (
    <div className="relative flex h-screen min-h-[900px] w-full flex-col overflow-hidden bg-white font-['Noto_Sans','Noto_Sans_CJK_SC',sans-serif] text-[15px] leading-[22px]">
      <MainHeader />
      <div className="relative flex h-[124px] shrink-0 items-start border-b-2 border-[#9a9da1] bg-linear-to-b from-white from-50% to-[#e6eaec]">
        <div className="flex w-20 flex-col pt-[14px] pl-[15px]">
          <svg viewBox="0 0 46 30" className="h-[30px] w-[46px]" fill="none" stroke="#5ea8ee" strokeWidth="2" aria-hidden="true"><path d="M12 26a8 8 0 0 1 0-15C14 4 19 2 24 2s9 4 10 9a8 8 0 0 1 0 15z" /><path d="M28 12v-2h-9l5 6-5 6h9v-2" stroke={O} strokeWidth="2.500" /></svg>
          <span className="pt-[7px] whitespace-nowrap text-black">云计算</span>
        </div>
        <div className="mt-[29px] ml-auto flex h-[74px] w-[13px] items-center justify-center rounded-l bg-[#4c5160]">
          <svg viewBox="0 0 6 60" className="h-[60px] w-[6px]" aria-hidden="true">
            <path d="M3 0v28" stroke="#2c303b" strokeWidth="6" strokeDasharray="1.500 1.500" />
            <path d="M3 28v14" stroke="#c4d05a" strokeWidth="6" strokeDasharray="2 1" />
            <path d="M3 42v18" stroke="#55c79d" strokeWidth="6" strokeDasharray="2 1" />
          </svg>
        </div>
      </div>
      <div className="flex min-h-0 flex-1 overflow-hidden">
        <MainLeft />
        <div className="flex flex-1 flex-col bg-black">
          <div className="h-[33px] shrink-0 bg-[#c9cdd2]" />
          <div className="flex justify-end pr-px"><ViewTools /></div>
        </div>
      </div>
      <StatusBar />
      <Taskbar />
      <DefinitionWindow />
      <ExpressionDialog />
    </div>
  );
}
